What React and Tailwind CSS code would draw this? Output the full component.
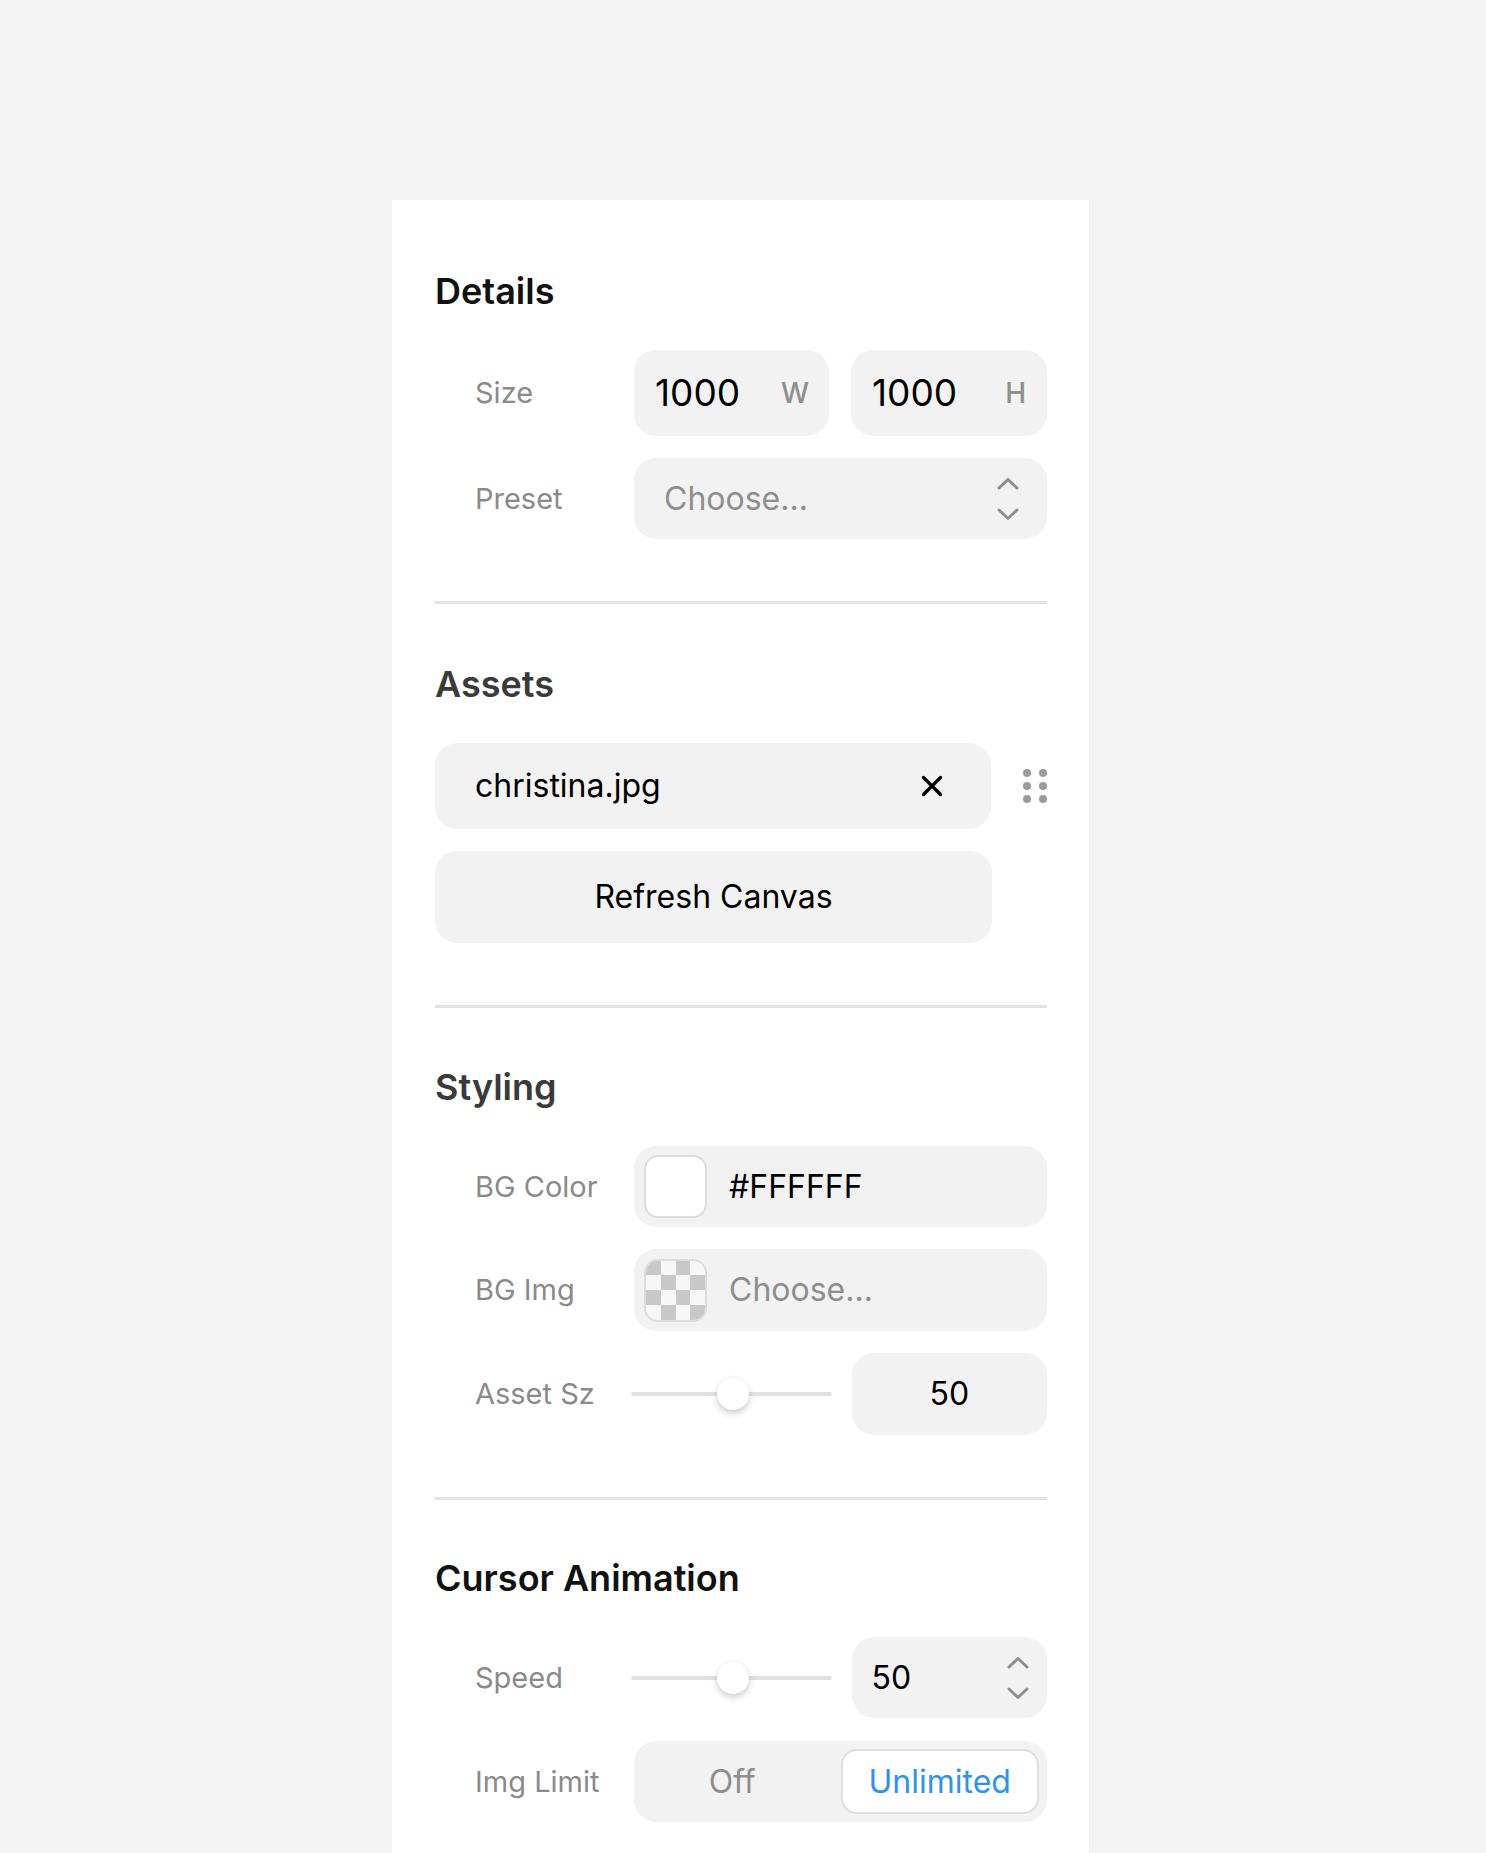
import React from 'react';

/**
 * Canvas settings panel
 * Details / Assets / Styling / Cursor Animation sections
 */
const font = { fontFamily: 'Inter, "Noto Sans", sans-serif' };

function Chevrons({ className = '' }) {
  return (
    <div className={`flex flex-col items-center gap-[18px] ${className}`}>
      <svg width="22" height="13" viewBox="0 0 22 13" fill="none">
        <path d="M2 11L11 2.5L20 11" stroke="#8e8e8e" strokeWidth="3" strokeLinecap="round" strokeLinejoin="round" />
      </svg>
      <svg width="22" height="13" viewBox="0 0 22 13" fill="none">
        <path d="M2 2L11 10.5L20 2" stroke="#8e8e8e" strokeWidth="3" strokeLinecap="round" strokeLinejoin="round" />
      </svg>
    </div>
  );
}

function Row({ label, children }) {
  return (
    <div className="flex items-center">
      <div className="w-[199px] shrink-0 pl-[40px] text-[29px] text-[#8a8a8a]">{label}</div>
      <div className="flex-1 min-w-0">{children}</div>
    </div>
  );
}

function Heading({ children, dark }) {
  return (
    <h2 className={`text-[36px] leading-[43px] font-semibold mb-[37px] ${dark ? 'text-[#111111]' : 'text-[#3a3a3a]'}`}>
      {children}
    </h2>
  );
}

function Slider({ value }) {
  return (
    <div className="relative h-[82px] -ml-[3px] -mr-[2px] flex items-center">
      <div className="h-[4px] w-full rounded-full bg-[#e2e2e2]" />
      <div
        className="absolute top-1/2 h-[32px] w-[32px] -translate-x-1/2 -translate-y-1/2 rounded-full bg-white shadow-[0_3px_7px_rgba(0,0,0,0.22)]"
        style={{ left: `${value}%` }}
      />
    </div>
  );
}

function Divider() {
  return <div className="h-[3px] bg-[#e3e3e3]" />;
}

function Checker() {
  const cells = [];
  for (let r = 0; r < 4; r++) {
    for (let c = 0; c < 4; c++) {
      cells.push(
        <div key={`${r}-${c}`} className={(r + c) % 2 === 0 ? 'bg-[#c8c8c8]' : 'bg-[#f7f7f7]'} />
      );
    }
  }
  return (
    <div className="grid h-[63px] w-[63px] shrink-0 grid-cols-4 grid-rows-4 overflow-hidden rounded-[14px] border-2 border-[#dcdcdc]">
      {cells}
    </div>
  );
}

export default function App() {
  return (
    <div className="h-[1853px] overflow-hidden bg-[#f3f3f3] pt-[200px]" style={font}>
      <div className="ml-[392px] w-[697px] min-h-[1700px] bg-white pl-[43px] pr-[42px] pt-[70px] pb-[60px]">
        {/* Details */}
        <section className="pb-[62px]">
          <Heading dark>Details</Heading>
          <div className="flex flex-col gap-[22px]">
            <Row label="Size">
              <div className="flex gap-[22px]">
                <div className="flex h-[86px] flex-1 items-center justify-between rounded-[22px] bg-[#f2f2f2] pl-[21px] pr-[20px]">
                  <span className="text-[37px] text-black">1000</span>
                  <span className="text-[28px] font-medium text-[#8e8e8e]">W</span>
                </div>
                <div className="flex h-[86px] flex-1 items-center justify-between rounded-[22px] bg-[#f2f2f2] pl-[21px] pr-[21px]">
                  <span className="text-[37px] text-black">1000</span>
                  <span className="text-[28px] font-medium text-[#8e8e8e]">H</span>
                </div>
              </div>
            </Row>
            <Row label="Preset">
              <div className="flex h-[81px] items-center justify-between rounded-[22px] bg-[#f2f2f2] pl-[30px] pr-[28px]">
                <span className="text-[32px] text-[#8e8e8e]">Choose...</span>
                <Chevrons />
              </div>
            </Row>
          </div>
        </section>
        <Divider />

        {/* Assets */}
        <section className="pt-[59px] pb-[62px]">
          <Heading>Assets</Heading>
          <div className="flex items-center">
            <div className="flex h-[86px] w-[557px] items-center justify-between rounded-[22px] bg-[#f2f2f2] pl-[40px] pr-[48px]">
              <span className="text-[32px] text-black">christina.jpg</span>
              <svg width="22" height="22" viewBox="0 0 22 22" fill="none">
                <path d="M2.5 2.5L19.5 19.5M19.5 2.5L2.5 19.5" stroke="#000" strokeWidth="3.2" strokeLinecap="round" />
              </svg>
            </div>
            <div className="ml-[32px] grid grid-cols-2 gap-x-[8px] gap-y-[5px]">
              {[0, 1, 2, 3, 4, 5].map((i) => (
                <span key={i} className="h-[8px] w-[8px] rounded-full bg-[#9b9b9b]" />
              ))}
            </div>
          </div>
          <button className="mt-[22px] flex h-[92px] w-[557px] items-center justify-center rounded-[22px] bg-[#f2f2f2] text-[32px] text-black">
            Refresh Canvas
          </button>
        </section>
        <Divider />

        {/* Styling */}
        <section className="pt-[58px] pb-[62px]">
          <Heading>Styling</Heading>
          <div className="flex flex-col gap-[22px]">
            <Row label="BG Color">
              <div className="flex h-[81px] items-center gap-[22px] rounded-[22px] bg-[#f2f2f2] pl-[10px]">
                <div className="h-[63px] w-[63px] shrink-0 rounded-[14px] border-2 border-[#dcdcdc] bg-white" />
                <span className="text-[32px] text-black">#FFFFFF</span>
              </div>
            </Row>
            <Row label="BG Img">
              <div className="flex h-[82px] items-center gap-[22px] rounded-[22px] bg-[#f2f2f2] pl-[10px]">
                <Checker />
                <span className="text-[32px] text-[#8e8e8e]">Choose...</span>
              </div>
            </Row>
            <Row label="Asset Sz">
              <div className="grid grid-cols-2 gap-[22px]">
                <Slider value={51} />
                <div className="flex h-[82px] items-center justify-center rounded-[22px] bg-[#f2f2f2] text-[32px] text-black">
                  50
                </div>
              </div>
            </Row>
          </div>
        </section>
        <Divider />

        {/* Cursor Animation */}
        <section className="pt-[57px]">
          <Heading dark>Cursor Animation</Heading>
          <div className="flex flex-col gap-[22px]">
            <Row label="Speed">
              <div className="grid grid-cols-2 gap-[22px]">
                <Slider value={51} />
                <div className="flex h-[81px] items-center justify-between rounded-[22px] bg-[#f2f2f2] pl-[20px] pr-[18px]">
                  <span className="text-[32px] text-black">50</span>
                  <Chevrons />
                </div>
              </div>
            </Row>
            <Row label="Img Limit">
              <div className="grid h-[81px] grid-cols-2 rounded-[22px] bg-[#f2f2f2] p-[8px]">
                <div className="flex items-center justify-center pr-[18px] text-[32px] text-[#8e8e8e]">Off</div>
                <div className="flex items-center justify-center rounded-[16px] border-2 border-[#dedede] bg-white text-[32px] text-[#2f93e6]">
                  Unlimited
                </div>
              </div>
            </Row>
          </div>
        </section>
      </div>
    </div>
  );
}
